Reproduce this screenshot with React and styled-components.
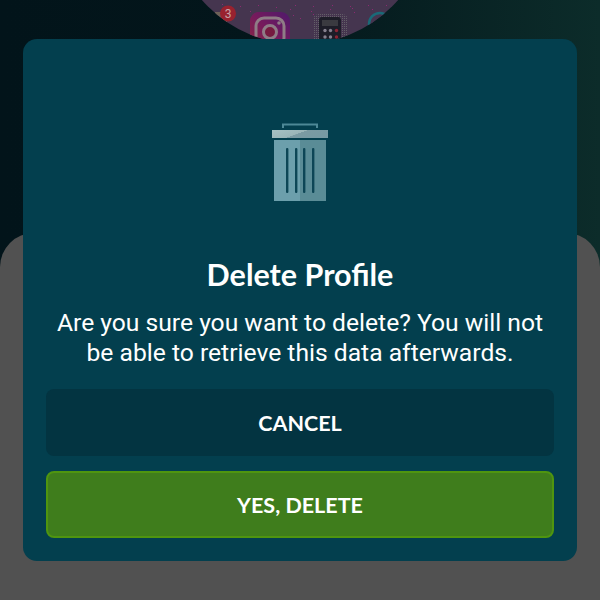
import React from "react";
import styled, { createGlobalStyle } from "styled-components";

const Global = createGlobalStyle`
  html, body { margin: 0; padding: 0; background: #515151; }
  * { box-sizing: border-box; }
`;

const Screen = styled.div`
  position: relative;
  width: 600px;
  height: 600px;
  overflow: hidden;
  display: flex;
  align-items: flex-start;
  justify-content: center;
  padding-top: 39px;
  background: linear-gradient(90deg, #02141a 0%, #03161b 45%, #0c2c2a 100%);
  font-family: Lato, "Liberation Sans", sans-serif;
`;

const Wallpaper = styled.svg`
  position: absolute;
  left: 0;
  top: 0;
`;

const Sheet = styled.div`
  position: absolute;
  left: 0;
  right: 0;
  top: 233px;
  bottom: 0;
  background: #515151;
  border-radius: 34px 34px 0 0;
`;

const Dialog = styled.div`
  position: relative;
  width: 554px;
  height: 522px;
  display: flex;
  flex-direction: column;
  align-items: center;
  padding: 84px 23px 0;
  background: #033f4e;
  border-radius: 14px;
  color: #ffffff;
`;

const Title = styled.h2`
  margin: 56px 0 0;
  font-size: 30.5px;
  line-height: 32px;
  font-weight: 700;
  text-align: center;
`;

const Message = styled.p`
  margin: 18px 0 0;
  width: 100%;
  padding: 0 8px;
  font-family: Roboto, "Liberation Sans", sans-serif;
  font-size: 24.65px;
  line-height: 29.5px;
  font-weight: 400;
  text-align: center;
`;

const Actions = styled.div`
  width: 100%;
  margin-top: 22px;
  display: flex;
  flex-direction: column;
  gap: 15px;
`;

const Action = styled.button`
  width: 100%;
  height: 67px;
  padding: 0;
  border-radius: 8px;
  border: ${(p) => (p.$primary ? "2px solid #4f950f" : "none")};
  background: ${(p) => (p.$primary ? "#3f7d1c" : "#033441")};
  color: #ffffff;
  font-family: inherit;
  font-size: 21.5px;
  font-weight: 700;
`;

const TrashIcon = () => (
  <svg width="56" height="79" viewBox="0 0 56 79" style={{ flex: "none" }}>
    <defs>
      <linearGradient id="lid" x1="0" y1="0" x2="1" y2="0.4">
        <stop offset="0" stopColor="#a7c2c4" />
        <stop offset="0.55" stopColor="#9ab5b8" />
        <stop offset="0.56" stopColor="#7b9ba3" />
        <stop offset="1" stopColor="#779aa3" />
      </linearGradient>
    </defs>
    <path d="M10 5V0.5h36V5h-2V2.5H12V5z" fill="#4d8896" />
    <rect x="0" y="7" width="56" height="8" fill="url(#lid)" />
    <rect x="2" y="17" width="26" height="61" fill="#6c9fac" />
    <rect x="28" y="17" width="26" height="61" fill="#5a8c96" />
    <g fill="#0d4656">
      <rect x="14" y="25" width="2.4" height="45" rx="1" />
      <rect x="23" y="25" width="2.4" height="45" rx="1" />
      <rect x="31" y="25" width="2.4" height="45" rx="1" />
      <rect x="40" y="25" width="2.4" height="45" rx="1" />
    </g>
  </svg>
);

const HomeScreen = () => (
  <Wallpaper width="600" height="120" viewBox="0 0 600 120">
    <defs>
      <linearGradient id="ig" x1="0" y1="1" x2="1" y2="0">
        <stop offset="0" stopColor="#8a2a40" />
        <stop offset="0.5" stopColor="#761a5c" />
        <stop offset="1" stopColor="#4e1a6c" />
      </linearGradient>
      <clipPath id="dome">
        <circle cx="300" cy="-86" r="130.5" />
      </clipPath>
      <pattern id="halo" width="2" height="2" patternUnits="userSpaceOnUse">
        <rect width="2" height="2" fill="#45354f" />
        <rect width="1" height="1" fill="#635f68" />
      </pattern>
    </defs>
    <g clipPath="url(#dome)">
      <rect x="160" y="0" width="280" height="50" fill="#45354f" />
      <g fill="#8b2a72">
        {[[222,4],[240,6],[258,5],[276,7],[295,5],[313,6],[332,5],[350,6],[368,5],[386,5],[250,11],[270,12],[290,9],[311,11],[330,9],[352,8],[372,9],[293,15],[313,14],[335,14],[354,12],[300,18],[322,17],[345,18]].map(([x, y]) => (
          <rect key={`${x}-${y}`} x={x} y={y} width="1" height="1" />
        ))}
      </g>
      <rect x="215" y="12" width="12" height="26" fill="#6e6258" />
      <circle cx="228" cy="13.5" r="8" fill="#99222f" />
      <text x="228" y="18" textAnchor="middle" fontFamily="Roboto, sans-serif" fontSize="12" fill="#c8a6a8">3</text>
      <rect x="250" y="12" width="40" height="40" rx="9" fill="url(#ig)" />
      <rect x="256" y="18" width="28" height="28" rx="8" fill="none" stroke="#8f7c86" strokeWidth="3" />
      <circle cx="270" cy="32" r="6.5" fill="#761a40" stroke="#8f7c86" strokeWidth="3" />
      <circle cx="279" cy="23" r="1.8" fill="#8f7c86" />
      <rect x="313" y="14" width="35" height="30" rx="6" fill="url(#halo)" />
      <rect x="319" y="17" width="22" height="30" rx="3" fill="#1d1d28" />
      <rect x="322" y="20" width="16" height="6" fill="#3a3a40" />
      <g fill="#85808e">
        <circle cx="325" cy="30.5" r="1.7" />
        <circle cx="330.5" cy="30.5" r="1.7" />
        <circle cx="325" cy="37" r="1.7" />
        <circle cx="330.5" cy="37" r="1.7" />
      </g>
      <circle cx="336.5" cy="30.5" r="1.7" fill="#8e2434" />
      <circle cx="336.5" cy="37" r="1.7" fill="#8e2434" />
      <circle cx="380" cy="24" r="11" fill="#45354f" stroke="#1a6a78" strokeWidth="2.5" />
    </g>
  </Wallpaper>
);

export default function App() {
  return (
    <>
      <Global />
      <Screen>
        <HomeScreen />
        <Sheet />
        <Dialog>
          <TrashIcon />
          <Title>Delete Profile</Title>
          <Message>Are you sure you want to delete? You will not be able to retrieve this data afterwards.</Message>
          <Actions>
            <Action>CANCEL</Action>
            <Action $primary>YES, DELETE</Action>
          </Actions>
        </Dialog>
      </Screen>
    </>
  );
}
